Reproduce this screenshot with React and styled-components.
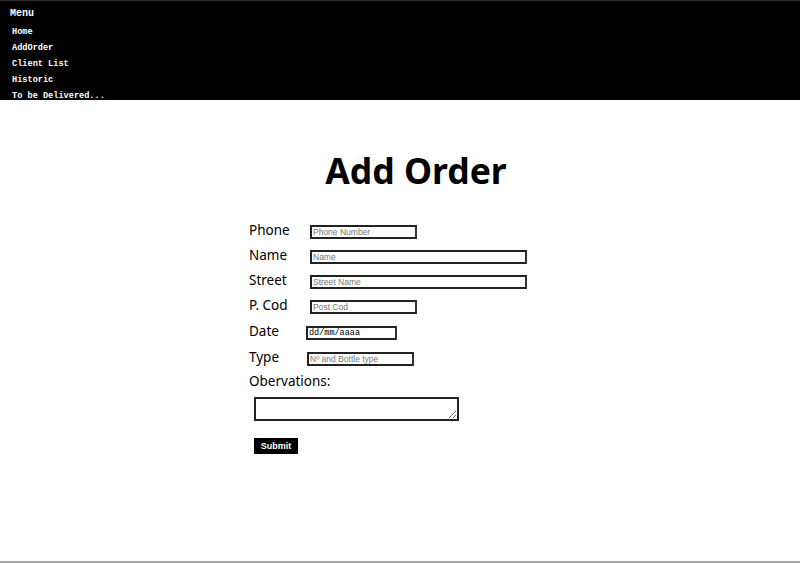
import React from "react";
import styled, { createGlobalStyle } from "styled-components";

const Global = createGlobalStyle`
  html, body { margin: 0; padding: 0; background: #fff; }
  * { box-sizing: border-box; }
`;

const Page = styled.div`
  height: 563px;
  display: flex;
  flex-direction: column;
  border-bottom: 2px solid #a4a4a4;
  overflow: hidden;
`;

const Header = styled.nav`
  height: 100px;
  background: #000;
  border-top: 1px solid #2c2c2c;
  overflow: hidden;
  padding: 5px 0 0 10px;
  font-family: "Liberation Mono", "Courier New", monospace;
  color: #fff;
  font-weight: bold;
`;

const MenuTitle = styled.div`
  font-size: 10px;
  line-height: 16px;
  margin-bottom: 2px;
`;

const MenuList = styled.ul`
  list-style: none;
  margin: 0;
  padding: 0 0 0 2px;
`;

const MenuItem = styled.li`
  font-size: 8.6px;
  line-height: 16px;
`;

const Main = styled.main`
  flex: 1;
  padding-top: 48px;
  font-family: "Noto Sans", "Open Sans", sans-serif;
`;

const Title = styled.h1`
  margin: 0 0 27px 32px;
  text-align: center;
  font-size: 35.5px;
  font-weight: bold;
  line-height: 44px;
  color: #000;
`;

const Form = styled.form`
  margin-left: 249px;
  display: flex;
  flex-direction: column;
`;

const Row = styled.div`
  display: flex;
  align-items: center;
  height: 25px;
  margin-top: ${(p) => p.$gap || 0}px;
`;

const Label = styled.label`
  width: ${(p) => p.$w}px;
  font-size: 13.5px;
  color: #000;
  line-height: 20px;
  margin-top: -4px;
`;

const Input = styled.input`
  width: ${(p) => p.$w}px;
  height: 14px;
  border: 2px solid #222;
  border-right-color: #333;
  padding: 0 1px;
  font-family: ${(p) => (p.$mono ? '"Liberation Mono", monospace' : '"Liberation Sans", Arial, sans-serif')};
  font-size: 8.5px;
  color: #000;
  background: #fff;
  outline: none;
  &::placeholder {
    color: ${(p) => (p.$mono ? "#000" : "#777")};
  }
`;

const ObsLabel = styled.div`
  font-size: 13.5px;
  line-height: 20px;
`;

const TextArea = styled.textarea`
  margin: 6px 0 0 5px;
  width: 205px;
  height: 24px;
  border: 2px solid #222;
  resize: both;
`;

const Submit = styled.button`
  margin: 17px 0 0 5px;
  width: 44px;
  height: 16px;
  background: #000;
  color: #fff;
  border: none;
  padding: 0;
  font-family: "Liberation Sans", Arial, sans-serif;
  font-weight: bold;
  font-size: 9px;
  align-self: flex-start;
`;

const fields = [
  { label: "Phone", lw: 61, iw: 107, ph: "Phone Number" },
  { label: "Name", lw: 61, iw: 217, ph: "Name" },
  { label: "Street", lw: 61, iw: 217, ph: "Street Name" },
  { label: "P. Cod", lw: 61, iw: 107, ph: "Post Cod" },
  { label: "Date", lw: 57, iw: 91, ph: "dd/mm/aaaa", mono: true, gap: 1 },
  { label: "Type", lw: 58, iw: 107, ph: "Nº and Bottle type", gap: 1 },
];

export default function App() {
  return (
    <>
      <Global />
      <Page>
        <Header>
          <MenuTitle>Menu</MenuTitle>
          <MenuList>
            <MenuItem>Home</MenuItem>
            <MenuItem>AddOrder</MenuItem>
            <MenuItem>Client List</MenuItem>
            <MenuItem>Historic</MenuItem>
            <MenuItem>To be Delivered...</MenuItem>
          </MenuList>
        </Header>
        <Main>
          <Title>Add Order</Title>
          <Form onSubmit={(e) => e.preventDefault()}>
            {fields.map((f) => (
              <Row key={f.label} $gap={f.gap}>
                <Label $w={f.lw}>{f.label}</Label>
                <Input $w={f.iw} $mono={f.mono} placeholder={f.ph} />
              </Row>
            ))}
            <ObsLabel>Obervations:</ObsLabel>
            <TextArea />
            <Submit type="submit">Submit</Submit>
          </Form>
        </Main>
      </Page>
    </>
  );
}
